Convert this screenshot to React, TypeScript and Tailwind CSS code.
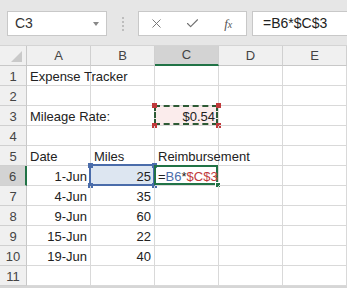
import { X, Check } from 'lucide-react';

const cols = ['A', 'B', 'C', 'D', 'E'];

type Row = { n: number; a?: string; aRight?: boolean; b?: string; bRight?: boolean; c?: string; cRight?: boolean };

const rows: Row[] = [
  { n: 1, a: 'Expense Tracker' },
  { n: 2 },
  { n: 3, a: 'Mileage Rate:', c: '$0.54', cRight: true },
  { n: 4 },
  { n: 5, a: 'Date', b: 'Miles', c: 'Reimbursement' },
  { n: 6, a: '1-Jun', aRight: true, b: '25', bRight: true },
  { n: 7, a: '4-Jun', aRight: true, b: '35', bRight: true },
  { n: 8, a: '9-Jun', aRight: true, b: '60', bRight: true },
  { n: 9, a: '15-Jun', aRight: true, b: '22', bRight: true },
  { n: 10, a: '19-Jun', aRight: true, b: '40', bRight: true },
  { n: 11 },
];

function Corner({ pos, color }: { pos: string; color: string }) {
  return <span className={`absolute w-[5px] h-[5px] ${pos} ${color}`} />;
}

function Cell({ text, right, children, className = '' }: { text?: string; right?: boolean; children?: React.ReactNode; className?: string }) {
  return (
    <div className={`relative h-[20px] border-r border-b border-[#d9d9d9] px-[3px] flex items-center pt-[2px] whitespace-nowrap ${right ? 'justify-end' : ''} ${className}`}>
      {text && <span className="relative z-10">{text}</span>}
      {children}
    </div>
  );
}

export default function App() {
  return (
    <div className="w-[347px] h-[288px] overflow-hidden bg-white text-[#222] font-['Liberation_Sans',Arial,sans-serif] text-[13px] flex flex-col">
      {/* formula bar */}
      <div className="h-[46px] shrink-0 bg-[#e6e6e6] flex items-start pt-[11px] pl-[7px] border-b border-[#d4d4d4]">
        <div className="w-[100px] h-[25px] bg-white border border-[#c8c8c8] flex items-center justify-between pl-[7px] pr-[7px]">
          <span className="text-[14px] text-[#333]">C3</span>
          <span className="w-0 h-0 border-l-[3px] border-r-[3px] border-t-[4px] border-l-transparent border-r-transparent border-t-[#888]" />
        </div>
        <div className="w-[31px] h-[25px] flex flex-col items-center justify-center gap-[2px]">
          <span className="w-[2px] h-[2px] bg-[#bdbdbd]" />
          <span className="w-[2px] h-[2px] bg-[#bdbdbd]" />
          <span className="w-[2px] h-[2px] bg-[#bdbdbd]" />
          <span className="w-[2px] h-[2px] bg-[#bdbdbd]" />
        </div>
        <div className="w-[109px] h-[25px] bg-white border border-[#c8c8c8] flex items-center">
          <div className="w-[36px] flex justify-center"><X size={15} strokeWidth={1.5} className="text-[#707070]" /></div>
          <div className="w-[36px] flex justify-center"><Check size={15} strokeWidth={1.8} className="text-[#707070]" /></div>
          <div className="w-[36px] flex justify-center text-[#555] font-['Liberation_Serif',serif] italic text-[13px]">
            f<span className="text-[10px] mt-[3px]">x</span>
          </div>
        </div>
        <div className="ml-[5px] flex-1 h-[25px] bg-white border border-[#c8c8c8] border-r-0 flex items-center pl-[10px] text-[14px] text-[#222]">
          =B6*$C$3
        </div>
      </div>

      {/* grid */}
      <div className="grid grid-cols-[27px_64px_64px_64px_64px_64px] grid-rows-[repeat(12,20px)] shrink-0">
        <div className="relative h-[20px] bg-[#f0f0f0] border-r border-b border-[#c8c8c8]">
          <span className="absolute right-[4px] bottom-[3px] w-0 h-0 border-l-[11px] border-b-[11px] border-l-transparent border-b-[#c9c9c9]" />
        </div>
        {cols.map((c) => (
          <div
            key={c}
            className={`h-[20px] flex items-center justify-center text-[13px] text-[#444] border-r border-[#d0d0d0] ${c === 'C' ? 'bg-[#d3d3d3] border-b-2 border-b-[#217346]' : 'bg-[#f0f0f0] border-b border-b-[#c8c8c8]'}`}
          >
            {c}
          </div>
        ))}

        {rows.map((r) => (
          <div key={r.n} className="contents">
            <div
              className={`h-[20px] flex items-center justify-center pt-[2px] text-[13px] text-[#444] border-b border-[#d0d0d0] ${r.n === 6 ? 'bg-[#d3d3d3] border-r-2 border-r-[#217346]' : 'bg-[#f0f0f0] border-r border-r-[#c8c8c8]'}`}
            >
              {r.n}
            </div>
            <Cell text={r.a} right={r.aRight} />
            {r.n === 6 ? (
              <Cell text={r.b} right className="bg-[#dde6f1]">
                <span className="absolute -left-[2px] -top-[2px] -right-[1px] -bottom-[1px] border-2 border-[#4a6caa]" />
                <Corner pos="-left-[3px] -top-[3px]" color="bg-[#4a6caa]" />
                <Corner pos="-right-[3px] -top-[3px]" color="bg-[#4a6caa]" />
                <Corner pos="-left-[3px] -bottom-[3px]" color="bg-[#4a6caa]" />
                <Corner pos="-right-[3px] -bottom-[3px]" color="bg-[#4a6caa]" />
              </Cell>
            ) : (
              <Cell text={r.b} right={r.bRight} />
            )}
            {r.n === 3 ? (
              <Cell text={r.c} right className="bg-[#fbecec]">
                <span className="absolute -left-[1px] -top-[1px] right-0 bottom-0 border-2 border-dashed border-[#2d5a35]" />
                <Corner pos="-left-[3px] -top-[3px]" color="bg-[#c0393b]" />
                <Corner pos="-right-[3px] -top-[3px]" color="bg-[#c0393b]" />
                <Corner pos="-left-[3px] -bottom-[3px]" color="bg-[#c0393b]" />
                <Corner pos="-right-[3px] -bottom-[3px]" color="bg-[#c0393b]" />
              </Cell>
            ) : r.n === 6 ? (
              <Cell>
                <span className="relative z-10">
                  =<span className="text-[#4a6caa]">B6</span>*<span className="text-[#c0393b]">$C$3</span>
                </span>
                <span className="absolute -left-[1px] -top-[1px] right-0 bottom-0 border-2 border-[#217346]" />
                <span className="absolute -right-[3px] -bottom-[3px] w-[6px] h-[6px] bg-[#217346] border border-white" />
              </Cell>
            ) : (
              <Cell text={r.c} right={r.cRight} />
            )}
            <Cell />
            <Cell />
          </div>
        ))}
      </div>
      <div className="flex-1 bg-[#d6d6d6]" />
    </div>
  );
}
